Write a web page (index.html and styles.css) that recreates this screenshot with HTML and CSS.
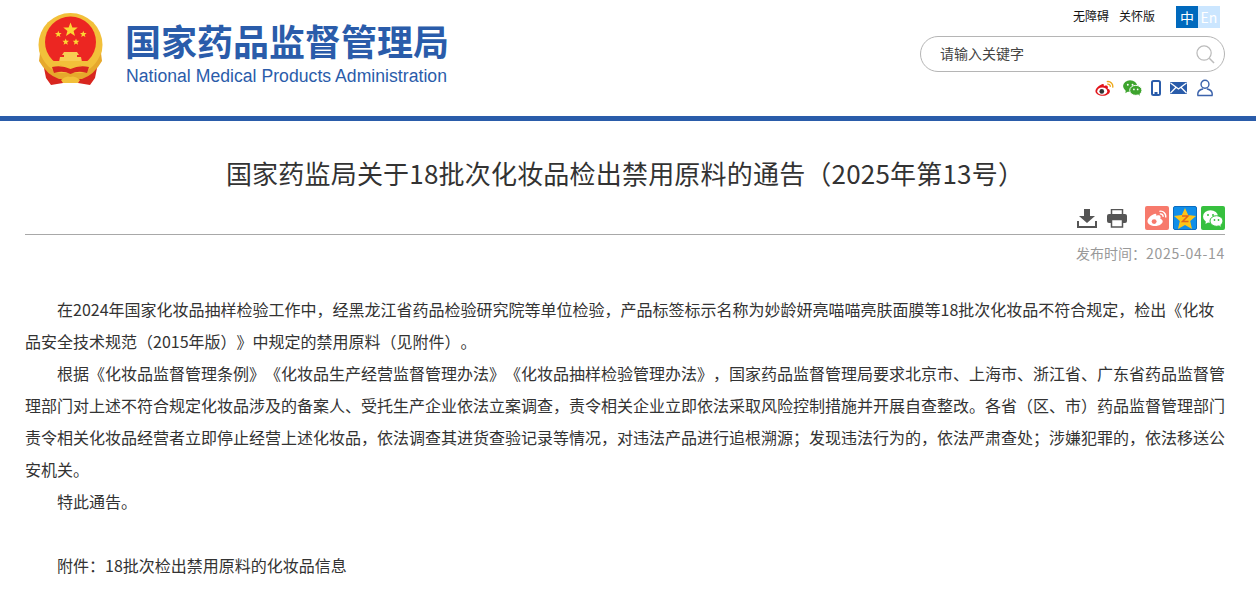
FILE: index.html

```html
<!DOCTYPE html>
<html lang="zh-CN">
<head>
    <meta charset="UTF-8">
    <meta name="viewport" content="width=device-width, initial-scale=1.0">
    <title>国家药监局关于18批次化妆品检出禁用原料的通告（2025年第13号）</title>
    <link rel="stylesheet" href="styles.css">
</head>
<body>
    <header class="site-header">
        <div class="header-inner">
            <a class="logo" href="#">
                <svg class="emblem" width="65" height="72" viewBox="0 0 65 72">
                    <path d="M14 50 L6 55 L8 65 L13 72 L25 70 L40 70 L52 72 L57 65 L59 55 L51 50 Z" fill="#d8261f"/>
                    <circle cx="32.500" cy="32" r="32" fill="#f2c03a"/>
                    <circle cx="32.500" cy="29" r="25.500" fill="#ec2622"/>
                    <path d="M2 40 Q8 56 22 60 L43 60 Q57 56 63 40 L64 48 Q56 62 44 66 L21 66 Q9 62 1 48 Z" fill="#e6a82c"/>
                    <polygon points="32.500,9.500 34.400,14.400 39.700,14.600 35.600,17.900 37,23 32.500,20.100 28,23 29.400,17.900 25.300,14.600 30.600,14.400" fill="#fcd634"/>
                    <polygon points="20.300,17.700 21.200,20 23.600,20.100 21.700,21.700 22.400,24 20.300,22.700 18.200,24 18.900,21.700 17,20.100 19.400,20" fill="#fcd634"/>
                    <polygon points="45.300,17.700 46.200,20 48.600,20.100 46.700,21.700 47.400,24 45.300,22.700 43.200,24 43.900,21.700 42,20.100 44.400,20" fill="#fcd634"/>
                    <polygon points="27.700,25.400 28.600,27.700 31,27.800 29.100,29.400 29.800,31.700 27.700,30.400 25.600,31.700 26.300,29.400 24.400,27.800 26.800,27.700" fill="#fcd634"/>
                    <polygon points="38,25.400 38.900,27.700 41.300,27.800 39.400,29.400 40.100,31.700 38,30.400 35.900,31.700 36.600,29.400 34.700,27.800 37.100,27.700" fill="#fcd634"/>
                    <path d="M26 39 L39 39 L41 42 L39 42 L39 44 L43 44 L44 49 L21 49 L22 44 L26 44 L26 42 L24 42 Z" fill="#f7cd52"/>
                    <path d="M12 48 L53 48 L50 53 Q42 51 38 55 L27 55 Q23 51 15 53 Z" fill="#f2c03a"/>
                    <path d="M14 54 Q24 52 32.500 56 Q41 52 51 54 L49 60 Q40 57 32.500 61 Q25 57 16 60 Z" fill="#d8261f"/>
                    <path d="M23 67 Q28 62 32.500 64 Q37 62 42 67 L40 70 L25 70 Z" fill="#f2c03a"/>
                </svg>
                <span class="logo-text">
                    <span class="logo-cn">国家药品监督管理局</span>
                    <span class="logo-en">National Medical Products Administration</span>
                </span>
            </a>
            <div class="header-tools">
                <div class="top-links">
                    <a href="#">无障碍</a>
                    <a href="#">关怀版</a>
                    <div class="lang">
                        <a class="lang-on" href="#">中</a>
                        <a class="lang-off" href="#">En</a>
                    </div>
                </div>
                <form class="search">
                    <input class="search-input" type="text" placeholder="请输入关键字">
                    <svg class="search-icon" width="19" height="19" viewBox="0 0 20 20">
                        <circle cx="8.500" cy="8.500" r="7.500" fill="none" stroke="#bbb" stroke-width="1.300"/>
                        <path d="M14 14 L19 19" stroke="#bbb" stroke-width="1.600"/>
                    </svg>
                </form>
                <div class="social">
                    <svg width="19" height="16" viewBox="0 0 21 17">
                        <path d="M8.500 4 C4.500 5 .5 9 .5 12 C.5 15 4.500 17 8.500 17 C13 17 16.500 14.500 16.500 12 C16.500 10 14.500 9.500 14 9.300 C14.800 7 14 5.800 12.500 5.700 C11.300 5.600 9.800 6.300 9.800 6.300 C10 4.800 9.800 3.700 8.500 4 Z" fill="#e2151b"/>
                        <ellipse cx="8" cy="12" rx="5.500" ry="4" fill="#fff"/>
                        <circle cx="7.500" cy="12.300" r="2.600" fill="#333"/>
                        <path d="M13 1.500 C17 .5 20.500 4 19.500 8 M13.500 4.300 C15.500 3.800 17.200 5.500 16.800 7.300" fill="none" stroke="#eda91b" stroke-width="1.500"/>
                    </svg>
                    <svg width="19" height="16" viewBox="0 0 20 17">
                        <ellipse cx="7.500" cy="6.500" rx="7.500" ry="6.300" fill="#3ea42e"/>
                        <path d="M3 10 L2.500 14 L7 11 Z" fill="#3ea42e"/>
                        <ellipse cx="13.500" cy="11" rx="6.500" ry="5.300" fill="#3ea42e" stroke="#fff" stroke-width="1"/>
                        <path d="M16 15 L17.500 17 L17.500 13.500 Z" fill="#3ea42e"/>
                        <circle cx="5" cy="5" r="1" fill="#fff"/>
                        <circle cx="10" cy="5" r="1" fill="#fff"/>
                        <circle cx="11.500" cy="10" r=".9" fill="#fff"/>
                        <circle cx="15.500" cy="10" r=".9" fill="#fff"/>
                    </svg>
                    <svg width="10" height="16" viewBox="0 0 10 16">
                        <rect x="1" y="1" width="8" height="14" rx="1.500" fill="#fff" stroke="#2a5caa" stroke-width="2"/>
                        <rect x="3.500" y="12" width="3" height="2.500" fill="#2a5caa"/>
                    </svg>
                    <svg class="mail-icon" width="17" height="12" viewBox="0 0 16 12" preserveAspectRatio="none">
                        <rect width="16" height="12" rx="1" fill="#2a5caa"/>
                        <path d="M.5 1 L8 7 L15.500 1 M.5 11 L5.500 5.500 M15.500 11 L10.500 5.500" fill="none" stroke="#fff" stroke-width="1.200"/>
                    </svg>
                    <svg width="16" height="18" viewBox="0 0 17 18">
                        <circle cx="8.500" cy="5" r="4.200" fill="none" stroke="#3b62ab" stroke-width="1.500"/>
                        <path d="M1 17 C0 12 4 10.500 6 10 M16 17 C17 12 13 10.500 11 10 M1 17 L16 17" fill="none" stroke="#3b62ab" stroke-width="1.500" stroke-linecap="round"/>
                    </svg>
                </div>
            </div>
        </div>
    </header>

    <main class="article">
        <h1 class="article-title">国家药监局关于18批次化妆品检出禁用原料的通告（2025年第13号）</h1>
        <div class="article-bar">
            <svg width="20" height="19" viewBox="0 0 20 19">
                <path d="M7 0 H13 V7 H18 L10 14 L2 7 H7 Z" fill="#555"/>
                <path d="M1 12 V18 H19 V12" fill="none" stroke="#555" stroke-width="2"/>
            </svg>
            <svg class="print-icon" width="20" height="19" viewBox="0 0 20 19">
                <rect x="4.500" y=".5" width="11" height="6" fill="#fff" stroke="#555" stroke-width="1.500"/>
                <rect y="5" width="20" height="9" rx="2" fill="#555"/>
                <rect x="4.500" y="10.500" width="11" height="7.500" fill="#fff" stroke="#555" stroke-width="1.500"/>
            </svg>
            <a class="share share-weibo" href="#">
                <svg width="20" height="18" viewBox="0 0 21 17">
                    <path d="M8.500 4 C4.500 5 .5 9 .5 12 C.5 15 4.500 17 8.500 17 C13 17 16.500 14.500 16.500 12 C16.500 10 14.500 9.500 14 9.300 C14.800 7 14 5.800 12.500 5.700 C11.300 5.600 9.800 6.300 9.800 6.300 C10 4.800 9.800 3.700 8.500 4 Z" fill="#fff"/>
                    <circle cx="7.500" cy="12.300" r="2.600" fill="#f77a6c"/>
                    <path d="M13 1.500 C17 .5 20.500 4 19.500 8 M13.500 4.300 C15.500 3.800 17.200 5.500 16.800 7.300" fill="none" stroke="#fff" stroke-width="1.500"/>
                </svg>
            </a>
            <a class="share share-qzone" href="#">
                <svg width="22" height="21" viewBox="0 0 22 21">
                    <polygon points="11,0 14.200,7 22,8 16.200,13 18,21 11,17 4,21 5.800,13 0,8 7.800,7" fill="#fcc417"/>
                    <path d="M8 8 H14 L8.500 13.500 H14.500" fill="none" stroke="#e0651b" stroke-width="1.500"/>
                </svg>
            </a>
            <a class="share share-wechat" href="#">
                <svg width="20" height="17" viewBox="0 0 20 17">
                    <ellipse cx="7.500" cy="6.500" rx="7.500" ry="6.300" fill="#fff"/>
                    <path d="M3 10 L2.500 14 L7 11 Z" fill="#fff"/>
                    <ellipse cx="13.500" cy="11" rx="6.500" ry="5.300" fill="#fff" stroke="#37c03f" stroke-width="1"/>
                    <path d="M16 15 L17.500 17 L17.500 13.500 Z" fill="#fff"/>
                    <circle cx="5" cy="5" r="1" fill="#37c03f"/>
                    <circle cx="10" cy="5" r="1" fill="#37c03f"/>
                    <circle cx="11.500" cy="10" r=".9" fill="#37c03f"/>
                    <circle cx="15.500" cy="10" r=".9" fill="#37c03f"/>
                </svg>
            </a>
        </div>
        <div class="article-date">发布时间：<span class="date-num">2025-04-14</span></div>
        <div class="article-body">
            <p>在2024年国家化妆品抽样检验工作中，经黑龙江省药品检验研究院等单位检验，产品标签标示名称为妙龄妍亮喵喵亮肤面膜等18批次化妆品不符合规定，检出《化妆品安全技术规范（2015年版）》中规定的禁用原料（见附件）。</p>
            <p>根据《化妆品监督管理条例》《化妆品生产经营监督管理办法》《化妆品抽样检验管理办法》，国家药品监督管理局要求北京市、上海市、浙江省、广东省药品监督管理部门对上述不符合规定化妆品涉及的备案人、受托生产企业依法立案调查，责令相关企业立即依法采取风险控制措施并开展自查整改。各省（区、市）药品监督管理部门责令相关化妆品经营者立即停止经营上述化妆品，依法调查其进货查验记录等情况，对违法产品进行追根溯源；发现违法行为的，依法严肃查处；涉嫌犯罪的，依法移送公安机关。</p>
            <p>特此通告。</p>
            <p>&nbsp;</p>
            <p>附件：18批次检出禁用原料的化妆品信息</p>
        </div>
    </main>
</body>
</html>
```

FILE: styles.css

```css
* {
    box-sizing: border-box;
}
body {
    margin: 0;
    font-family: "Noto Sans CJK SC", "Liberation Sans", sans-serif;
    color: #333;
    background: #fff;
    overflow: hidden;
    text-spacing-trim: space-all;
}
a {
    color: inherit;
    text-decoration: none;
}
.site-header {
    height: 121px;
    border-bottom: 5px solid #2a5caa;
}
.header-inner {
    width: 1200px;
    height: 116px;
    margin: 0 0 0 25px;
    display: flex;
    justify-content: space-between;
}
.logo {
    display: flex;
    align-items: flex-start;
    padding: 13px 0 0 13px;
}
.emblem {
    flex: none;
}
.logo-text {
    display: flex;
    flex-direction: column;
    margin-left: 22px;
    color: #2a5caa;
}
.logo-cn {
    font-size: 36px;
    font-weight: 700;
    line-height: 40px;
    margin-top: 7px;
    white-space: nowrap;
}
.logo-en {
    font-family: "Liberation Sans", sans-serif;
    font-size: 17.600px;
    line-height: 18px;
    letter-spacing: .03px;
    margin: 7px 0 0 1px;
    white-space: nowrap;
}
.header-tools {
    width: 305px;
    padding-top: 6px;
}
.top-links {
    display: flex;
    justify-content: flex-end;
    align-items: flex-start;
    gap: 10px;
    font-size: 12px;
    line-height: 20px;
    color: #111;
    padding-right: 5px;
}
.lang {
    display: flex;
    margin-left: 11px;
}
.lang a {
    width: 22px;
    height: 22px;
    line-height: 22px;
    text-align: center;
    font-size: 14px;
    color: #fff;
}
.lang-on {
    background: #0069bd;
}
.lang-off {
    background: #cbe6ff;
}
.search {
    display: flex;
    align-items: center;
    justify-content: space-between;
    width: 305px;
    height: 36px;
    margin-top: 8px;
    padding: 0 9px 0 19px;
    border: 1px solid #b5b5b5;
    border-radius: 18px;
}
.search-input {
    flex: 1;
    margin-bottom: 2px;
    padding: 0;
    border: 0;
    outline: 0;
    font: 14px "Noto Sans CJK SC", sans-serif;
    color: #333;
    background: transparent;
}
.search-input::placeholder {
    color: #444;
    opacity: 1;
}
.social {
    display: flex;
    justify-content: flex-end;
    align-items: center;
    gap: 9px;
    margin-top: 7px;
    padding-right: 12px;
}
.mail-icon {
    margin-right: 1px;
}
.article {
    width: 1200px;
    margin: 0 0 0 25px;
}
.article-title {
    margin: 34px 0 0;
    font-size: 26px;
    font-weight: 400;
    line-height: 36px;
    letter-spacing: .2px;
    text-align: center;
    color: #333;
}
.article-bar {
    display: flex;
    justify-content: flex-end;
    align-items: center;
    height: 29px;
    margin-top: 15px;
    padding-bottom: 4px;
    border-bottom: 1px solid #a8a8a8;
}
.print-icon {
    margin: 0 18px 0 10px;
}
.share {
    width: 24px;
    height: 24px;
    margin-left: 4px;
    display: flex;
    align-items: center;
    justify-content: center;
    border-radius: 2px;
}
.share-weibo {
    background: #f77a6c;
    margin-left: 0;
}
.share-qzone {
    background: #0f8ee9;
    border: 1px solid #0a6cc0;
}
.share-wechat {
    background: #37c03f;
}
.article-date {
    margin-top: 8px;
    font-size: 14px;
    line-height: 20px;
    text-align: right;
    color: #999;
}
.date-num {
    letter-spacing: .7px;
}
.article-body {
    margin-top: 30px;
    font-size: 16px;
    line-height: 32px;
    color: #333;
}
.article-body p {
    margin: 0;
    text-indent: 32px;
}
```
